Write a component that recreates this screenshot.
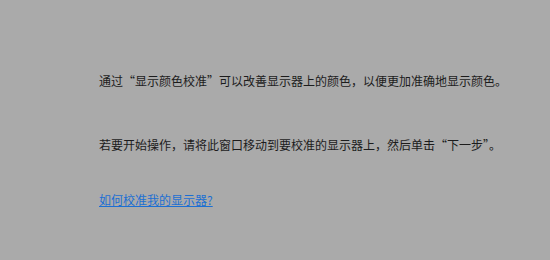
export default function App() {
  return (
    <div
      className="w-[550px] h-[260px] bg-[#aaaaaa] text-[#1c1c1c] text-[12px] leading-[16px] pl-[99px] pt-[73px]"
      style={{ fontFamily: '"Noto Sans CJK SC", sans-serif' }}
    >
      <p className="whitespace-nowrap">通过“显示颜色校准”可以改善显示器上的颜色，以便更加准确地显示颜色。</p>
      <p className="whitespace-nowrap mt-[48px]">若要开始操作，请将此窗口移动到要校准的显示器上，然后单击“下一步”。</p>
      <p className="mt-[39px]">
        <a href="#" className="text-[#1c6fd3] underline">如何校准我的显示器?</a>
      </p>
    </div>
  );
}
